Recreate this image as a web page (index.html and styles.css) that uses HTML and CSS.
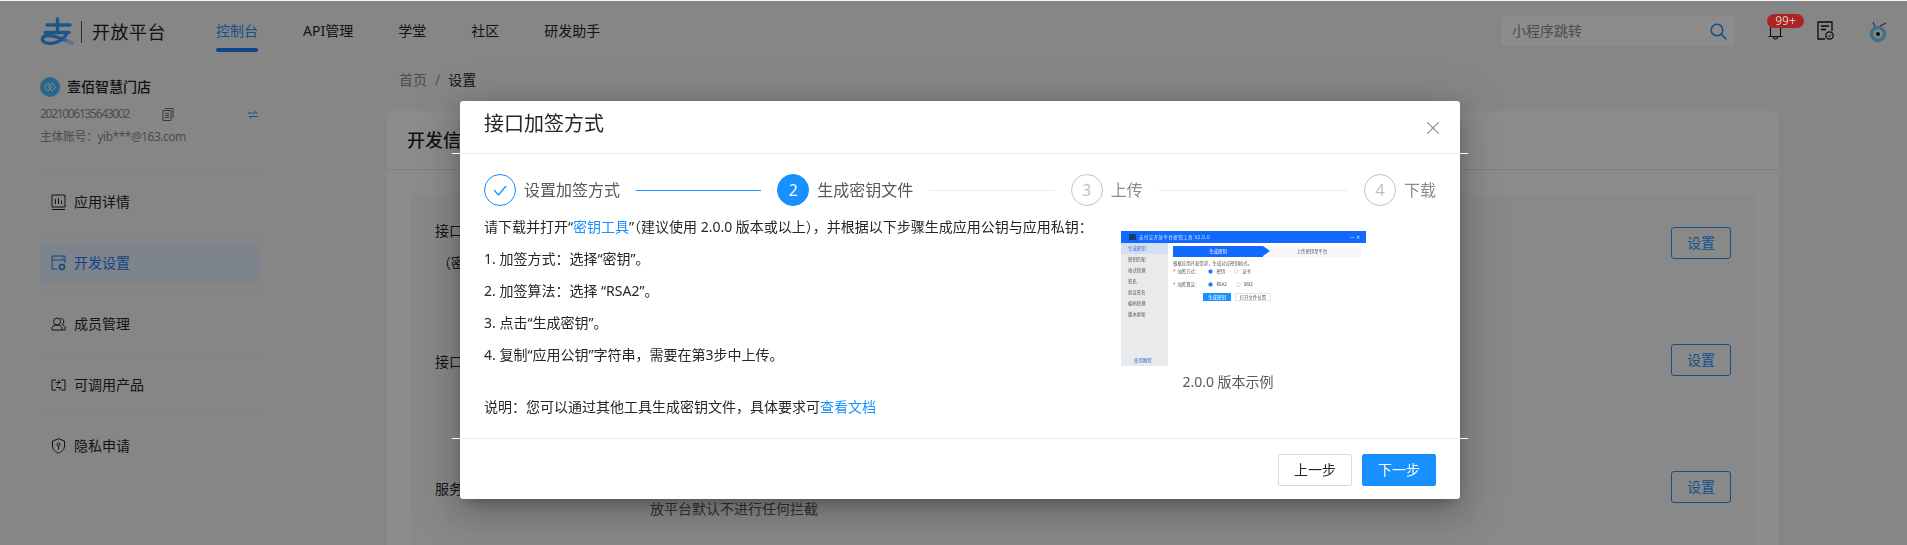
FILE: index.html
```html
<!DOCTYPE html>
<html lang="zh-CN">
<head>
  <meta charset="utf-8">
  <title>开放平台 - 设置</title>
  <link rel="stylesheet" href="styles.css">
</head>
<body>
  <header class="topbar">
    <svg class="logo" viewBox="0 0 34 28" fill="none" stroke-linecap="round">
      <defs>
        <linearGradient id="logoFade" x1="0" y1="0" x2="1" y2="0.4">
          <stop offset="0" stop-color="#2f9eff"/>
          <stop offset="0.75" stop-color="#2f9eff"/>
          <stop offset="1" stop-color="#a8d4ff"/>
        </linearGradient>
      </defs>
      <path d="M7 8H30M17.500 2V15M5 15.500H29" stroke="#2f9eff" stroke-width="3.400"/>
      <path d="M27 16C23 26 10 27.500 5 25.500C0 23 2.500 18 9 18.500C17 19 25 23 33 26.500" stroke="url(#logoFade)" stroke-width="3.400"/>
    </svg>
    <span class="logo-sep"></span>
    <span class="logo-text">开放平台</span>
    <nav class="nav">
      <a class="nav-item active">控制台</a>
      <a class="nav-item">API管理</a>
      <a class="nav-item">学堂</a>
      <a class="nav-item">社区</a>
      <a class="nav-item">研发助手</a>
    </nav>
    <div class="search">
      <span>小程序跳转</span>
      <svg width="17" height="17" viewBox="0 0 17 17" fill="none" stroke="#2090ff" stroke-width="1.500">
        <circle cx="7" cy="7" r="5.800"/>
        <path d="M11.300 11.300L16 16" stroke-linecap="round"/>
      </svg>
    </div>
    <div class="bell">
      <svg width="15" height="13" viewBox="0 0 15 13" fill="none" stroke="#222" stroke-width="1.200">
        <path d="M2.500 0V9.500H12.500V0M0.500 9.500H14.500M5.500 10C5.500 12.500 9.500 12.500 9.500 10"/>
      </svg>
      <span class="badge">99+</span>
    </div>
    <svg class="doc" width="17" height="19" viewBox="0 0 17 19" fill="none" stroke="#111" stroke-width="1.300">
      <path d="M8 18H1V1H15V10"/>
      <path d="M4 5H12M4 8.500H9" stroke-width="1.500"/>
      <circle cx="12.500" cy="14.500" r="3.700"/>
      <path d="M11 14.500L12.200 15.700L14.200 13.500" stroke-width="1"/>
    </svg>
    <svg class="avatar" width="23" height="23" viewBox="0 0 23 23" fill="none">
      <circle cx="11.500" cy="11.500" r="11.500" fill="#f2f2f2"/>
      <path d="M9 7L7 2M14 6L20 3" stroke="#333" stroke-width="1"/>
      <circle cx="12" cy="14" r="6.500" stroke="#70d0ff" stroke-width="3.500"/>
      <circle cx="12" cy="14" r="2" fill="#1c1c1c"/>
    </svg>
  </header>

  <div class="layout">
    <aside class="sidebar">
      <div class="org">
        <svg width="20" height="20" viewBox="0 0 20 20" fill="none">
          <circle cx="10" cy="10" r="10" fill="#4fbcff"/>
          <path d="M8 6L4.500 10L8 14L11.500 10ZM12 6L8.500 10L12 14L15.500 10Z" stroke="#f0f8ff" stroke-width="1"/>
        </svg>
        <span>壹佰智慧门店</span>
      </div>
      <div class="app-id">
        <span>2021006135643002</span>
        <svg class="copy-icon" width="12" height="14" viewBox="0 0 12 14" fill="none" stroke="#666" stroke-width="1">
          <path d="M3 1.500H11V11M1 3.500H9V13.500H1ZM3 6.500H7M3 8.500H7M3 10.500H7"/>
        </svg>
        <svg class="swap-icon" width="10" height="9" viewBox="0 0 10 9" fill="none" stroke="#3a90ff" stroke-width="1">
          <path d="M0 3H9L6.500 0.500M10 6.500H1L3.500 8.500"/>
        </svg>
      </div>
      <div class="account">主体账号&#xFF1A;yib***@163.com</div>

      <ul class="menu">
        <li class="menu-item">
          <div class="menu-link">
            <svg width="15" height="16" viewBox="0 0 15 16" fill="none" stroke="#222" stroke-width="1">
              <path d="M1 1H14V13H1ZM1 15.500H14M4.500 5V10M7.500 4V10M10.500 6.500V10"/>
            </svg>
            <span>应用详情</span>
          </div>
        </li>
        <li class="menu-item">
          <div class="menu-link active">
            <svg width="15" height="16" viewBox="0 0 15 16" fill="none" stroke="#1f80f0" stroke-width="1">
              <path d="M6 14H1V1H14V8M1 5H14M11 3H12.500"/>
              <circle cx="11" cy="12" r="2.500" stroke-width="1.500"/>
            </svg>
            <span>开发设置</span>
          </div>
        </li>
        <li class="menu-item">
          <div class="menu-link">
            <svg width="15" height="14" viewBox="0 0 15 14" fill="none" stroke="#222" stroke-width="1">
              <circle cx="6" cy="4.500" r="3.500"/>
              <path d="M1 13C0 9.500 3 8 6 8C9 8 12 9.500 11 13ZM9.500 1.500C13 1 14 6 11 7.500C13 8 15 10 14 13H11.500"/>
            </svg>
            <span>成员管理</span>
          </div>
        </li>
        <li class="menu-item">
          <div class="menu-link">
            <svg width="15" height="14" viewBox="0 0 15 14" fill="none" stroke="#222" stroke-width="1">
              <path d="M5 2H1V12H5M10 2H14V12H10M6 7.500L8 5M5 9.500H10L8 12M4.500 4.500H9.500L7 2"/>
            </svg>
            <span>可调用产品</span>
          </div>
        </li>
        <li class="menu-item">
          <div class="menu-link">
            <svg width="15" height="16" viewBox="0 0 15 16" fill="none" stroke="#222" stroke-width="1">
              <path d="M7.500 0.800L13.500 3V8C13.500 11.500 10.500 14 7.500 15.200C4.500 14 1.500 11.500 1.500 8V3Z"/>
              <circle cx="7.500" cy="6.500" r="1.500"/>
              <path d="M7.500 8V11.500"/>
            </svg>
            <span>隐私申请</span>
          </div>
        </li>
      </ul>
    </aside>

    <main class="content">
      <div class="breadcrumb">
        <span>首页</span>
        <span class="crumb-sep">/</span>
        <span class="crumb-now">设置</span>
      </div>
      <section class="card">
        <h2 class="card-title">开发信息</h2>
        <div class="panel">
          <div class="row row-first">
            <div class="row-label">接口加签方式<br><span class="row-sub">&#xFF08;密钥/证书&#xFF09;</span></div>
            <button class="outline-btn">设置</button>
          </div>
          <div class="row">
            <div class="row-label">接口内容加密方式</div>
            <button class="outline-btn">设置</button>
          </div>
          <div class="row row-last">
            <div class="row-label">服务器校验</div>
            <div class="row-value">放平台默认不进行任何拦截</div>
            <button class="outline-btn">设置</button>
          </div>
        </div>
      </section>
    </main>
  </div>

  <div class="overlay">
    <div class="modal">
      <div class="modal-header">
        <span class="modal-title">接口加签方式</span>
        <svg class="modal-close" width="12" height="12" viewBox="0 0 12 12" stroke="#8c8c8c" stroke-width="1.100">
          <path d="M0 0L12 12M12 0L0 12"/>
        </svg>
      </div>

      <div class="modal-body">
        <div class="steps">
          <div class="step finished">
            <span class="step-icon">
              <svg width="14" height="11" viewBox="0 0 14 11" fill="none" stroke="#1890ff" stroke-width="1.300">
                <path d="M1 5L5.500 10L13 1"/>
              </svg>
            </span>
            <span class="step-title">设置加签方式</span>
            <span class="step-line"></span>
          </div>
          <div class="step current">
            <span class="step-icon">2</span>
            <span class="step-title">生成密钥文件</span>
            <span class="step-line"></span>
          </div>
          <div class="step">
            <span class="step-icon">3</span>
            <span class="step-title">上传</span>
            <span class="step-line"></span>
          </div>
          <div class="step last">
            <span class="step-icon">4</span>
            <span class="step-title">下载</span>
          </div>
        </div>

        <div class="guide">
          <div class="guide-text">
            <p>请下载并打开“<a class="link">密钥工具</a>”&#xFF08;建议使用 2.0.0 版本或以上&#xFF09;&#xFF0C;并根据以下步骤生成应用公钥与应用私钥&#xFF1A;</p>
            <p>1. 加签方式&#xFF1A;选择“密钥”。</p>
            <p>2. 加签算法&#xFF1A;选择 “RSA2”。</p>
            <p>3. 点击“生成密钥”。</p>
            <p>4. 复制“应用公钥”字符串&#xFF0C;需要在第3步中上传。</p>
            <p class="note">说明&#xFF1A;您可以通过其他工具生成密钥文件&#xFF0C;具体要求可<a class="link">查看文档</a></p>
          </div>

          <figure class="sample">
            <div class="tool">
              <div class="tool-bar">
                <span class="tool-logo"></span>
                <span class="tool-name">支付宝开放平台密钥工具 V2.0.0</span>
                <span class="tool-win">— ✕</span>
              </div>
              <div class="tool-main">
                <div class="tool-side">
                  <div class="tool-side-item active">生成密钥</div>
                  <div class="tool-side-item">密钥匹配</div>
                  <div class="tool-side-item">格式转换</div>
                  <div class="tool-side-item">签名</div>
                  <div class="tool-side-item">验证签名</div>
                  <div class="tool-side-item">编码转换</div>
                  <div class="tool-side-item">版本更新</div>
                  <div class="tool-side-foot">使用教程</div>
                </div>
                <div class="tool-page">
                  <div class="tool-tabs">
                    <span class="tool-tab on">生成密钥</span>
                    <span class="tool-tab">上传密钥至平台</span>
                  </div>
                  <div class="tool-tip">根据应用开发需求&#xFF0C;生成对应密钥格式。</div>
                  <div class="tool-field"><i>*</i> 加签方式&#xFF1A;<b class="dot on"></b>密钥<b class="dot"></b>证书</div>
                  <div class="tool-field"><i>*</i> 加签算法&#xFF1A;<b class="dot on"></b>RSA2<b class="dot"></b>SM2</div>
                  <div class="tool-btns">
                    <span class="tool-btn on">生成密钥</span>
                    <span class="tool-btn">打开文件位置</span>
                  </div>
                </div>
              </div>
            </div>
            <figcaption>2.0.0 版本示例</figcaption>
          </figure>
        </div>
      </div>

      <div class="modal-footer">
        <button class="btn">上一步</button>
        <button class="btn primary">下一步</button>
      </div>
    </div>
  </div>
</body>
</html>
```

FILE: styles.css
```css
* {
  box-sizing: border-box;
}

html, body {
  height: 545px;
  overflow: hidden;
}

body {
  margin: 0;
  background-color: #f5f5f5;
  color: #262626;
  font-family: "Noto Sans", "Noto Sans CJK SC", sans-serif;
  font-size: 14px;
  line-height: 22px;
}

p, h2, ul, figure {
  margin: 0;
  padding: 0;
}

/* top bar */
.topbar {
  display: flex;
  align-items: flex-start;
  height: 64px;
  padding: 0 18px 0 40px;
}

.logo {
  width: 34px;
  height: 28px;
  margin-top: 17px;
}

.logo-sep {
  width: 1px;
  height: 22px;
  margin: 21px 10px 0 7px;
  background: #555;
}

.logo-text {
  margin-top: 19px;
  font-size: 18px;
  line-height: 26px;
  letter-spacing: 0.500px;
  color: #222;
}

.nav {
  display: flex;
  gap: 45px;
  margin-left: 50px;
  padding-top: 20px;
}

.nav-item {
  color: #262626;
}

.nav-item.active {
  color: #2e8fff;
}

.nav-item.active::after {
  content: "";
  display: block;
  height: 4px;
  margin-top: 6px;
  border-radius: 2px;
  background: #1a80ff;
}

.search {
  display: flex;
  align-items: center;
  justify-content: space-between;
  width: 234px;
  height: 30px;
  margin: 16px 0 0 auto;
  padding: 0 8px 0 11px;
  border-radius: 4px;
  background: #fff;
  color: #8c8c8c;
}

.bell {
  position: relative;
  width: 15px;
  height: 13px;
  margin: 27px 0 0 33px;
}

.bell svg {
  display: block;
}

/* sits above the dimming layer, it stays brighter in the source page */
.badge {
  position: absolute;
  z-index: 2;
  left: -1px;
  top: -13px;
  width: 37px;
  height: 14px;
  border-radius: 7px;
  background: #ad2323;
  color: #d9c4c4;
  font-size: 12px;
  line-height: 14px;
  text-align: center;
}

.doc {
  margin: 21px 0 0 34px;
}

.avatar {
  margin: 20px 0 0 32px;
}

/* page body */
.layout {
  display: flex;
}

.sidebar {
  width: 220px;
  margin-left: 40px;
  padding-top: 13px;
}

.org {
  display: flex;
  align-items: center;
  gap: 7px;
  height: 20px;
  font-weight: 500;
  color: #1f1f1f;
}

.app-id {
  display: flex;
  align-items: center;
  height: 20px;
  margin-top: 7px;
  font-size: 12px;
  color: #8c8c8c;
  letter-spacing: -1.300px;
}

.copy-icon {
  margin-left: 33px;
}

.swap-icon {
  margin-left: auto;
  margin-right: 2px;
}

.account {
  height: 20px;
  margin-top: 3px;
  font-size: 12px;
  line-height: 20px;
  letter-spacing: -0.500px;
  color: #8c8c8c;
}

.menu {
  margin-top: 24px;
  list-style: none;
}

.menu-item {
  padding: 10px 0;
  border-top: 1px solid #ebebeb;
}

.menu-link {
  display: flex;
  align-items: center;
  gap: 8px;
  height: 40px;
  padding-left: 11px;
  border-radius: 4px;
}

.menu-link.active {
  background: #e3f1ff;
  color: #1f80f0;
}

.content {
  width: 1392px;
  margin-left: 127px;
}

.breadcrumb {
  display: flex;
  gap: 8px;
  margin-top: 5px;
  padding-left: 12px;
  color: #8c8c8c;
}

.crumb-now {
  color: #262626;
}

.card {
  height: 434px;
  margin-top: 20px;
  border-radius: 8px 8px 0 0;
  background: #fff;
}

.card-title {
  height: 59px;
  padding: 15px 20px 0;
  border-bottom: 1px solid #e8e8e8;
  font-size: 18px;
  font-weight: 500;
  line-height: 28px;
  color: #1f1f1f;
}

.panel {
  margin: 24px 24px 0 23px;
  background: #fafafa;
}

.row {
  display: flex;
  align-items: flex-start;
  height: 127px;
  padding: 33px 24px 0 25px;
}

.row-first {
  height: 117px;
}

.row-last {
  height: 107px;
}

.row-label {
  width: 215px;
  margin-top: 2px;
  line-height: 32px;
  white-space: nowrap;
}

.row-first .row-label {
  margin-top: -12px;
}

.row-sub {
  margin-left: 2px;
}

.row-value {
  margin-top: 27px;
  color: #595959;
}

.outline-btn {
  width: 60px;
  height: 32px;
  margin-left: auto;
  padding: 0;
  border: 1px solid #2196ff;
  border-radius: 3px;
  background: transparent;
  color: #2196ff;
  font: inherit;
}

/* modal */
.overlay {
  position: fixed;
  top: 1px;
  left: 0;
  right: 0;
  bottom: 0;
  padding: 100px 0 0 460px;
  background: rgba(0, 0, 0, 0.45);
}

.modal {
  width: 1000px;
  border-radius: 3px;
  background: #fff;
  box-shadow: 0 6px 16px -8px rgba(0, 0, 0, 0.32), 0 9px 28px 0 rgba(0, 0, 0, 0.2), 0 12px 48px 16px rgba(0, 0, 0, 0.12);
}

.modal-header {
  position: relative;
  display: flex;
  justify-content: space-between;
  height: 53px;
  padding: 9px 21px 0 24px;
}

/* the rule runs 8px past the modal on both sides in the source page */
.modal-header::after,
.modal-footer::before {
  content: "";
  position: absolute;
  left: -8px;
  right: -8px;
  height: 1px;
  background: linear-gradient(to right, #fff 8px, #ececec 8px, #ececec calc(100% - 8px), #fff calc(100% - 8px));
}

.modal-header::after {
  bottom: 0;
}

.modal-title {
  font-size: 20px;
  line-height: 28px;
  color: #262626;
}

.modal-close {
  margin-top: 12px;
}

.modal-body {
  padding: 20px 24px 0;
}

.steps {
  display: flex;
}

.step {
  display: flex;
  flex: 1 1 0;
  align-items: center;
  height: 32px;
  color: #bfbfbf;
}

.step.last {
  flex: none;
}

.step-icon {
  display: flex;
  align-items: center;
  justify-content: center;
  flex: none;
  width: 32px;
  height: 32px;
  border: 1px solid #c4c4c4;
  border-radius: 50%;
  font-size: 16px;
}

.step-title {
  margin-left: 8px;
  font-size: 16px;
  color: #8c8c8c;
  white-space: nowrap;
}

.step-line {
  flex: 1;
  height: 1px;
  margin: 0 16px;
  background: #ececec;
}

.step.finished .step-icon {
  border-color: #1890ff;
}

.step.finished .step-line {
  background: #1890ff;
}

.step.finished .step-title,
.step.current .step-title {
  color: #595959;
}

.step.current .step-icon {
  border-color: #1890ff;
  background: #1890ff;
  color: #fff;
}

.guide {
  display: flex;
  margin-top: 10px;
}

.guide-text {
  width: 637px;
  flex: none;
}

.guide-text p {
  margin-bottom: 10px;
}

.guide-text .note {
  margin: 30px 0 20px;
}

.link {
  color: #1890ff;
}

.sample {
  width: 214px;
  margin-top: 15px;
  text-align: center;
  color: #595959;
}

.sample figcaption {
  margin-top: 5px;
}

/* little picture of the key tool */
.tool {
  width: 245px;
  height: 135px;
  text-align: left;
  font-size: 4.400px;
  line-height: 6px;
  color: #555;
  background: #fff;
  filter: blur(0.5px);
}

.tool-bar {
  display: flex;
  align-items: center;
  gap: 3px;
  height: 12px;
  padding: 0 6px 0 8px;
  background: #1269ff;
  color: #dbe8ff;
}

.tool-logo {
  width: 7px;
  height: 6px;
  background: #123a78;
}

.tool-name {
  letter-spacing: 0.500px;
}

.tool-win {
  margin-left: auto;
  font-size: 5px;
}

.tool-main {
  display: flex;
  height: 123px;
}

.tool-side {
  position: relative;
  width: 47px;
  background: #e9eaec;
}

.tool-side-item {
  height: 11px;
  padding-left: 7px;
  line-height: 11px;
}

.tool-side-item.active {
  background: #d5deee;
  color: #3c6fd0;
}

.tool-side-foot {
  position: absolute;
  left: 13px;
  bottom: 3px;
  color: #3c6fd0;
}

.tool-page {
  flex: 1;
  padding: 3px 5px 0;
}

.tool-tabs {
  display: flex;
  height: 11px;
  background: #f7f7f7;
  line-height: 11px;
  text-align: center;
}

.tool-tab {
  position: relative;
  width: 90px;
  flex: none;
}

.tool-tab + .tool-tab {
  flex: 1;
}

.tool-tab.on {
  background: #1269ff;
  color: #fff;
}

.tool-tab.on::after {
  content: "";
  position: absolute;
  left: 100%;
  top: 0;
  border-left: 7px solid #1269ff;
  border-top: 5.500px solid transparent;
  border-bottom: 5.500px solid transparent;
}

.tool-tip {
  margin-top: 3px;
}

.tool-field {
  display: flex;
  align-items: center;
  height: 6px;
  margin-top: 2px;
}

.tool-field + .tool-field {
  margin-top: 7px;
}

.tool-field i {
  margin-right: 2px;
  color: #e33;
  font-style: normal;
}

.dot {
  width: 5px;
  height: 5px;
  margin: 0 3px 0 9px;
  border: 1px solid #ddd;
  border-radius: 50%;
}

.dot.on {
  border-color: #8ab4ff;
  background: #1269ff;
}

.tool-btns {
  display: flex;
  gap: 4px;
  margin: 6px 0 0 30px;
}

.tool-btn {
  width: 36px;
  height: 8px;
  border: 1px solid #e4e4e4;
  line-height: 6px;
  text-align: center;
}

.tool-btn.on {
  width: 28px;
  border-color: #1890ff;
  background: #1890ff;
  color: #fff;
}

.modal-footer {
  position: relative;
  display: flex;
  justify-content: flex-end;
  gap: 10px;
  height: 61px;
  padding: 16px 24px 0;
}

.modal-footer::before {
  top: 0;
}

.btn {
  width: 74px;
  height: 32px;
  padding: 0;
  border: 1px solid #d9d9d9;
  border-radius: 2px;
  background: #fff;
  color: #262626;
  font: inherit;
}

.btn.primary {
  border-color: #1890ff;
  background: #1890ff;
  color: #fff;
}
```
